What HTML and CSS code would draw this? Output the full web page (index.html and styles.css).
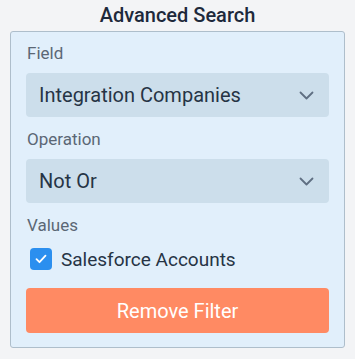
FILE: index.html
```html
<!DOCTYPE html>
<html lang="en">
<head>
    <meta charset="UTF-8">
    <meta name="viewport" content="width=device-width, initial-scale=1.0">
    <title>Advanced Search</title>
    <link rel="stylesheet" href="styles.css">
</head>
<body>

<h1 class="title">Advanced Search</h1>

<div class="panel">

    <!-- Field -->
    <label class="field-label">Field</label>
    <div class="select">
        <span>Integration Companies</span>
        <svg class="chevron" width="15" height="9" viewBox="0 0 15 9"><path d="M1.5 1.5l6 6 6-6" fill="none" stroke="#5f6f82" stroke-width="1.8" stroke-linecap="round" stroke-linejoin="round"/></svg>
    </div>

    <!-- Operation -->
    <label class="field-label">Operation</label>
    <div class="select">
        <span>Not Or</span>
        <svg class="chevron" width="15" height="9" viewBox="0 0 15 9"><path d="M1.5 1.5l6 6 6-6" fill="none" stroke="#5f6f82" stroke-width="1.8" stroke-linecap="round" stroke-linejoin="round"/></svg>
    </div>

    <!-- Values -->
    <label class="field-label">Values</label>
    <div class="check-row">
        <span class="checkbox">
            <svg width="12" height="10" viewBox="0 0 12 10"><path d="M1.5 5.2l3 3 6-6.5" fill="none" stroke="#fff" stroke-width="1.8" stroke-linecap="round" stroke-linejoin="round"/></svg>
        </span>
        <span>Salesforce Accounts</span>
    </div>

    <button class="remove-btn">Remove Filter</button>
</div>

</body>
</html>
```

FILE: styles.css
```css
/* Advanced search panel */
body {
    font-family: Roboto, "Liberation Sans", sans-serif;
    margin: 0;
    padding: 0;
    background-color: #f3f4f6;
    width: 355px;
}
.title {
    margin: 0;
    height: 31px;
    line-height: 31px;
    text-align: center;
    font-size: 20px;
    font-weight: 500;
    color: #1e293b;
}
.panel {
    margin: 0 10px 0 10px;
    width: 335px;
    box-sizing: border-box;
    background-color: #e1effb;
    border: 1px solid #aebecb;
    border-radius: 3px;
    padding: 11px 15px 14px 15px;
    display: flex;
    flex-direction: column;
}
.field-label {
    display: block;
    font-size: 17px;
    line-height: 21px;
    color: #5b6775;
    margin: 0 0 9px 1px;
}
.select {
    display: flex;
    align-items: center;
    justify-content: space-between;
    height: 44px;
    background-color: #ccdeeb;
    border-radius: 4px;
    padding: 0 15px 0 13px;
    font-size: 20px;
    color: #263445;
    margin-bottom: 12px;
}
.chevron {
    display: block;
}
.check-row {
    display: flex;
    align-items: center;
    height: 22px;
    gap: 9px;
    font-size: 19px;
    color: #263445;
    margin: 3px 0 18px 4px;
}
.checkbox {
    width: 22px;
    height: 22px;
    border-radius: 4px;
    background-color: #2b8fef;
    display: flex;
    align-items: center;
    justify-content: center;
}
.remove-btn {
    height: 45px;
    border: none;
    border-radius: 4px;
    background-color: #ff8a63;
    color: #fff;
    font-family: Roboto, "Liberation Sans", sans-serif;
    font-size: 20px;
    cursor: pointer;
}
```
